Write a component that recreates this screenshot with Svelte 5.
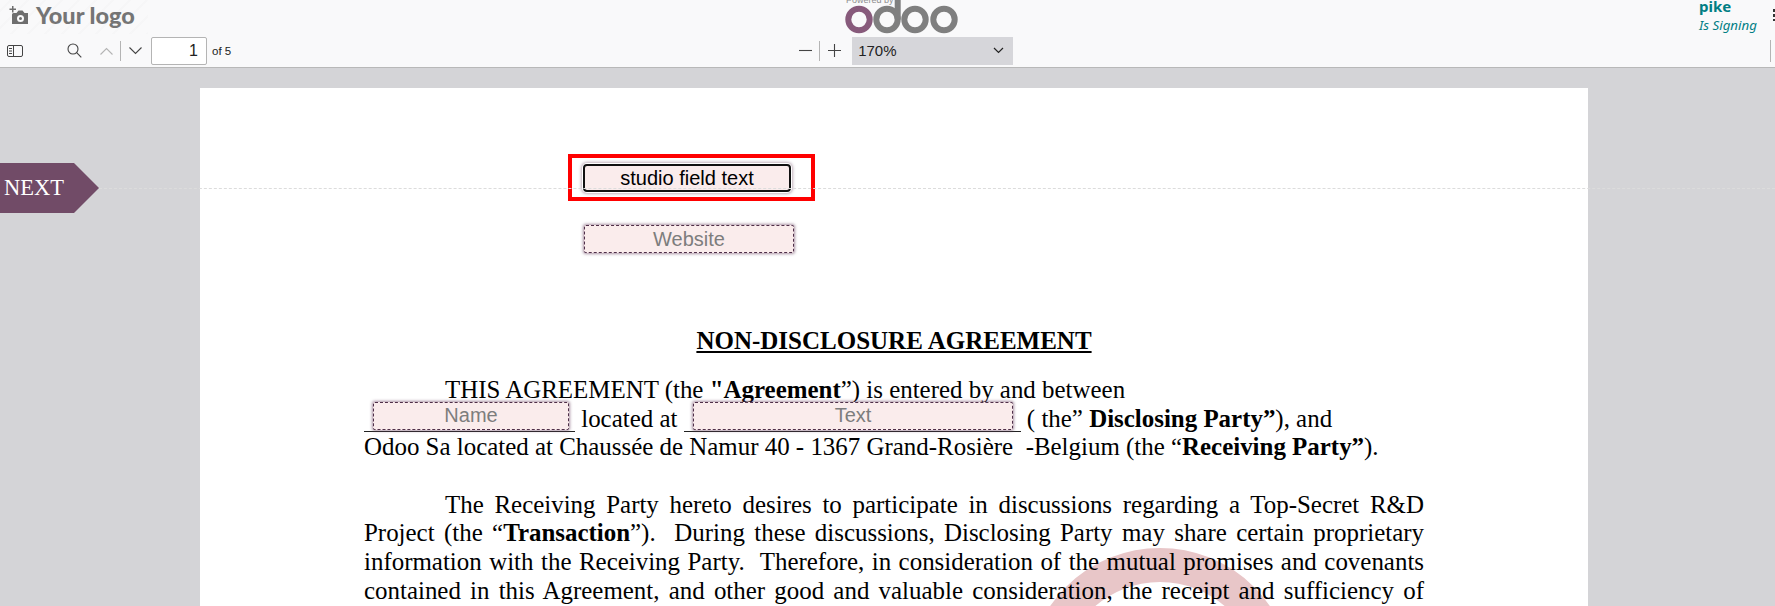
<script>
  const fields = [
    { key: 'studio', label: 'studio field text', left: 383, top: 76, width: 208, height: 28, active: true },
    { key: 'website', label: 'Website', left: 384, top: 137, width: 210, height: 28 },
    { key: 'name', label: 'Name', left: 173, top: 314, width: 196, height: 28, raised: true },
    { key: 'text', label: 'Text', left: 493, top: 314, width: 320, height: 28, raised: true }
  ];
</script>

<div class="viewer">
  <header class="topbar">
    <div class="brand-row">
      <div class="your-logo">
        <svg width="19" height="19" viewBox="0 0 19 19" fill="#6e6e6e">
          <path d="M3 0h1.500v2.500H7V4H4.500v2.500H3V4H.5V2.500H3z" />
          <path fill-rule="evenodd" d="M4.500 7h3L9.500 4.500h4L15.500 7H19v11H3V8.500A1.500 1.500 0 0 1 4.500 7zm7 2a3.500 3.500 0 1 0 0 7 3.500 3.500 0 0 0 0-7zm0 2a1.500 1.500 0 1 1 0 3 1.500 1.500 0 0 1 0-3z" />
        </svg>
        <span>Your logo</span>
      </div>
      <div class="powered">
        <span class="powered-text">Powered by</span>
        <svg width="120" height="34" viewBox="0 0 120 34" fill="none" stroke-width="6">
          <circle cx="19" cy="19.500" r="10.700" stroke="#875a7b" />
          <circle cx="47" cy="19.500" r="10.700" stroke="#7f7f7f" />
          <path d="M57.700 19.500V-6" stroke="#7f7f7f" />
          <circle cx="75" cy="19.500" r="10.700" stroke="#7f7f7f" />
          <circle cx="104" cy="19.500" r="10.700" stroke="#7f7f7f" />
        </svg>
      </div>
      <div class="signer">
        <strong>pike</strong>
        <em>Is Signing</em>
      </div>
      <span class="kebab"></span>
    </div>

    <div class="toolbar">
      <button class="tool sidebar-btn" aria-label="Toggle sidebar">
        <svg width="16" height="12" viewBox="0 0 16 12" fill="none" stroke="#444">
          <rect x="0.500" y="0.500" width="15" height="11" rx="1.500" />
          <path d="M6.500 0.500v11M2 3.500h3M2 6h3M2 8.500h3" />
        </svg>
      </button>
      <button class="tool search-btn" aria-label="Search">
        <svg width="15" height="15" viewBox="0 0 15 15" fill="none" stroke="#444" stroke-width="1.100">
          <circle cx="6" cy="6" r="5" />
          <path d="M9.700 9.700 14.300 14.300" />
        </svg>
      </button>
      <button class="tool up-btn" aria-label="Previous page">
        <svg width="13" height="8" viewBox="0 0 13 8" fill="none" stroke="#b4b4b4" stroke-width="1.100"><path d="M.5 7.500 6.500 1.500l6 6" /></svg>
      </button>
      <span class="sep"></span>
      <button class="tool down-btn" aria-label="Next page">
        <svg width="13" height="8" viewBox="0 0 13 8" fill="none" stroke="#444" stroke-width="1.100"><path d="M.5.500l6 6 6-6" /></svg>
      </button>
      <input class="page-input" value="1" aria-label="Page" />
      <span class="page-count">of 5</span>

      <button class="tool minus-btn" aria-label="Zoom out">
        <svg width="13" height="13" viewBox="0 0 13 13" stroke="#444" stroke-width="1.100"><path d="M0 6.500h13" /></svg>
      </button>
      <span class="sep zoom-sep"></span>
      <button class="tool plus-btn" aria-label="Zoom in">
        <svg width="13" height="13" viewBox="0 0 13 13" stroke="#444" stroke-width="1.100"><path d="M0 6.500h13M6.500 0v13" /></svg>
      </button>
      <div class="zoom-select">
        <span>170%</span>
        <svg width="11" height="7" viewBox="0 0 11 7" fill="none" stroke="#222" stroke-width="1.200"><path d="M1 1l4.500 4.500L10 1" /></svg>
      </div>
      <span class="end-sep"></span>
    </div>
  </header>

  <main class="canvas">
    <article class="page">
      <div class="seal"></div>

      <h1>NON-DISCLOSURE AGREEMENT</h1>

      <p class="intro">
        <span class="indent"></span>THIS AGREEMENT (the <b>"Agreement</b>”) is entered by and between<br />
        <span class="blank name-blank"></span> located at <span class="blank text-blank"></span> ( the” <b>Disclosing Party”</b>), and<br />
        Odoo Sa located at Chaussée de Namur 40 - 1367 Grand-Rosière &nbsp;-Belgium (the “<b>Receiving Party”</b>).
      </p>

      <p class="body">
        <span class="line"><span class="indent"></span>The Receiving Party hereto desires to participate in discussions regarding a Top-Secret R&amp;D</span>
        <span class="line">Project (the “<b>Transaction</b>”). &nbsp;During these discussions, Disclosing Party may share certain proprietary</span>
        <span class="line">information with the Receiving Party. &nbsp;Therefore, in consideration of the mutual promises and covenants</span>
        <span class="line">contained in this Agreement, and other good and valuable consideration, the receipt and sufficiency of</span>
      </p>

      {#each fields as f (f.key)}
        <div
          class="sign-item"
          class:active={f.active}
          class:raised={f.raised}
          style="left:{f.left}px;top:{f.top}px;width:{f.width}px;height:{f.height}px"
        >{f.label}</div>
      {/each}
      <div class="focus-box"></div>
    </article>

    <div class="guide"></div>
    <div class="next">NEXT</div>
  </main>
</div>

<style>
  :global(body) {
    margin: 0;
    overflow: hidden;
    background: #d4d4d7;
  }

  .viewer {
    display: flex;
    flex-direction: column;
    height: 606px;
    overflow: hidden;
  }

  .topbar {
    flex: none;
    height: 67px;
    background: #f9f9fa;
    border-bottom: 1px solid #b8b8b8;
    font-family: "Liberation Sans", sans-serif;
  }

  .brand-row {
    position: relative;
    display: flex;
    align-items: flex-start;
    height: 34px;
  }

  .your-logo {
    box-sizing: border-box;
    display: flex;
    align-items: center;
    gap: 8px;
    width: 148px;
    height: 34px;
    padding: 0 0 4px 9px;
    background: repeating-linear-gradient(-45deg, rgba(0, 0, 0, 0.012) 0 2px, transparent 2px 12px);
    font-family: Lato, sans-serif;
    font-weight: 900;
    font-size: 23.500px;
    line-height: 24px;
    color: #757575;
  }

  .powered {
    position: absolute;
    left: 840px;
    top: 0;
    width: 120px;
    height: 34px;
    overflow: hidden;
  }

  .powered svg {
    display: block;
  }

  .powered-text {
    position: absolute;
    left: 6px;
    top: -5px;
    font-size: 9px;
    line-height: 10px;
    color: #8f8f8f;
  }

  .signer {
    margin-left: auto;
    width: 74px;
    display: flex;
    flex-direction: column;
    font-family: "Noto Sans", sans-serif;
    color: #017e84;
  }

  .signer strong {
    font-size: 15px;
    line-height: 12px;
  }

  .signer em {
    font-size: 13.300px;
    line-height: 18px;
    margin-top: 4px;
  }

  .kebab {
    width: 3px;
    height: 12px;
    margin-top: 9px;
    margin-right: -1px;
    background: repeating-linear-gradient(#333 0 3px, transparent 3px 5px);
  }

  .toolbar {
    display: flex;
    align-items: center;
    height: 33px;
  }

  .tool {
    display: flex;
    align-items: center;
    justify-content: center;
    padding: 0;
    border: 0;
    background: none;
  }

  .sidebar-btn { margin-left: 7px; }
  .search-btn { margin-left: 44px; }
  .up-btn { margin-left: 18px; }
  .down-btn { margin-left: 8px; }
  .minus-btn { margin-left: 568px; }
  .plus-btn { margin-left: 8px; }

  .sep {
    width: 1px;
    height: 20px;
    margin-left: 7px;
    background: #b4b4b4;
  }

  .page-input {
    box-sizing: border-box;
    width: 56px;
    height: 28px;
    margin-left: 9px;
    padding: 0 8px 0 0;
    border: 1px solid #b4b4b4;
    border-radius: 2px;
    background: #fff;
    text-align: right;
    font: 16px "Liberation Sans", sans-serif;
    color: #222;
  }

  .page-count {
    margin-left: 5px;
    font-size: 11.500px;
    color: #222;
  }

  .zoom-select {
    box-sizing: border-box;
    display: flex;
    align-items: center;
    justify-content: space-between;
    width: 161px;
    height: 28px;
    margin-left: 11px;
    padding: 0 9px 0 6px;
    background: #d6d6da;
    font-size: 15px;
    color: #222;
  }

  .end-sep {
    width: 1px;
    height: 22px;
    margin-left: auto;
    margin-right: 4px;
    background: #b4b4b4;
  }

  .canvas {
    position: relative;
    flex: 1;
    min-height: 0;
    padding: 20px 0 0 200px;
    display: flex;
    overflow: hidden;
  }

  .page {
    position: relative;
    box-sizing: border-box;
    flex: none;
    width: 1388px;
    height: 1796px;
    padding: 238px 164px 0 164px;
    background: #fff;
    font-family: "Liberation Serif", serif;
    font-size: 24.930px;
    line-height: 29px;
    color: #000;
    overflow: hidden;
  }

  h1 {
    position: relative;
    margin: 0 0 21px;
    text-align: center;
    text-decoration: underline;
    font-size: 25px;
    line-height: 29px;
    font-weight: 700;
  }

  p {
    position: relative;
    margin: 0;
  }

  .intro {
    white-space: nowrap;
    line-height: 28.600px;
  }

  .body {
    margin-top: 29px;
    line-height: 28.700px;
  }

  .line {
    display: block;
    text-align: justify;
    text-align-last: justify;
  }

  .indent {
    display: inline-block;
    width: 81px;
  }

  .blank {
    display: inline-block;
    height: 0;
    border-bottom: 1.500px solid #222;
    vertical-align: -5px;
  }

  .name-blank { width: 211px; }
  .text-blank { width: 337px; }

  .seal {
    position: absolute;
    left: 827px;
    top: 460px;
    width: 266px;
    height: 266px;
    box-sizing: border-box;
    border: 34px solid #e8c6c8;
    border-radius: 50%;
  }

  .sign-item {
    position: absolute;
    box-sizing: border-box;
    display: flex;
    align-items: center;
    justify-content: center;
    border: 1px dashed #4f2f49;
    border-radius: 2px;
    background: #faecec;
    box-shadow: 0 0 3px 1px rgba(113, 75, 103, 0.6);
    font-family: "Liberation Sans", sans-serif;
    font-size: 20px;
    line-height: 24px;
    color: #7d7d7d;
  }

  .sign-item.raised {
    padding-bottom: 3px;
  }

  .sign-item.active {
    border: 2px solid #111;
    border-radius: 4px;
    box-shadow: 0 0 0 1px #fff, 0 0 3px 2px rgba(113, 75, 103, 0.45);
    color: #000;
  }

  .focus-box {
    position: absolute;
    left: 368px;
    top: 66px;
    width: 247px;
    height: 47px;
    box-sizing: border-box;
    border: 4px solid #f00;
  }

  .guide {
    position: absolute;
    left: 99px;
    right: 0;
    top: 120px;
    border-top: 1px dashed #dcdcdc;
  }

  .next {
    position: absolute;
    left: 0;
    top: 95px;
    box-sizing: border-box;
    width: 99px;
    height: 50px;
    padding-left: 4px;
    background: #714b67;
    clip-path: polygon(0 0, 74px 0, 100% 50%, 74px 100%, 0 100%);
    font-family: "Liberation Serif", serif;
    font-size: 22.500px;
    line-height: 50px;
    color: #fff;
  }
</style>
